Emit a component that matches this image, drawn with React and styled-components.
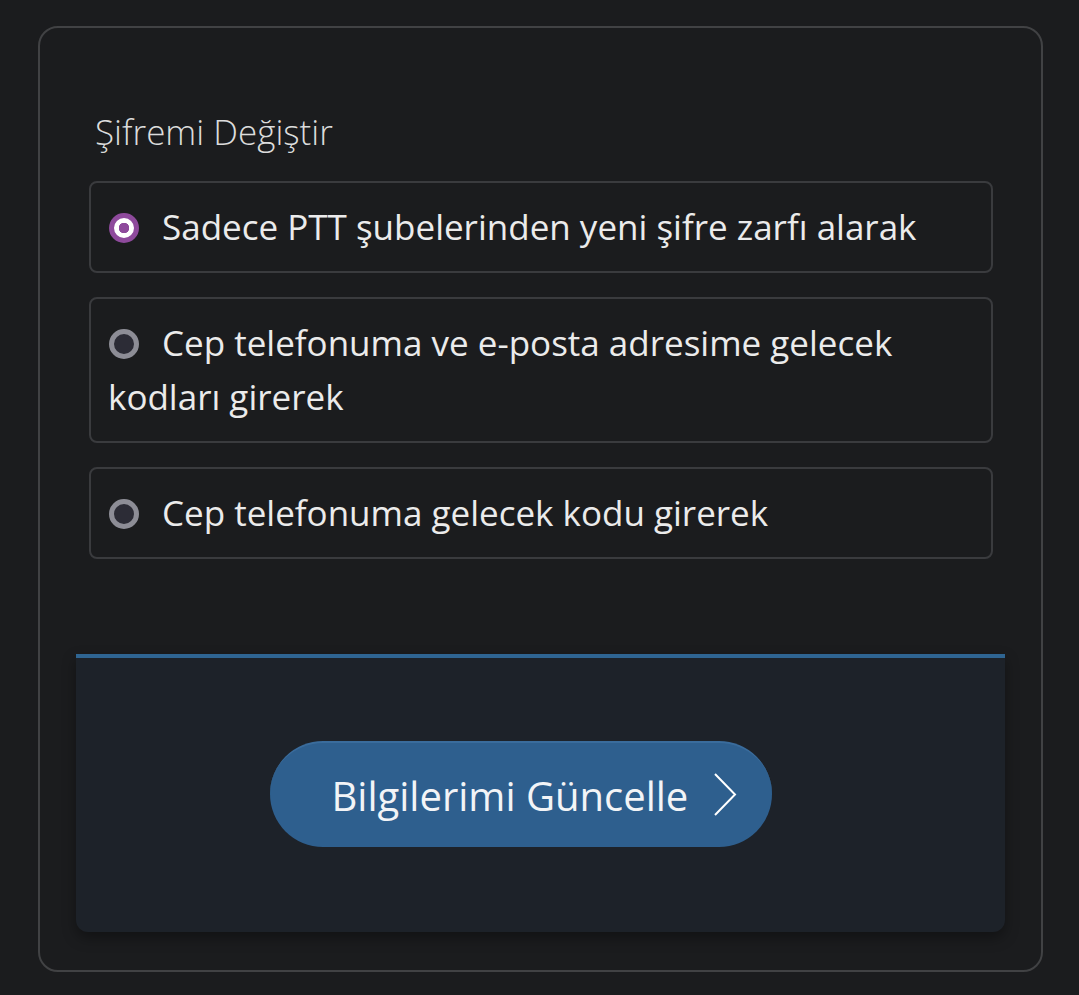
import React, { useState } from 'react';
import styled, { createGlobalStyle } from 'styled-components';

const GlobalStyle = createGlobalStyle`
  html, body {
    margin: 0;
    background-color: #1b1c1e;
  }
  body {
    font-family: "Open Sans", "Liberation Sans", sans-serif;
  }
`;

const Page = styled.div`
  padding: 26px 36px 24px 38px;
`;

const Card = styled.section`
  border: 2px solid #414244;
  border-radius: 20px;
  padding: 78px 36px 38px 36px;
`;

const Form = styled.div`
  padding: 0 12px 0 13px;
`;

const Title = styled.h2`
  margin: 0 0 23px 6px;
  font-size: 35px;
  line-height: 52px;
  font-weight: 300;
  color: #dcdcdc;
`;

const OptionList = styled.div`
  display: flex;
  flex-direction: column;
  gap: 24px;
`;

const Option = styled.label`
  display: block;
  border: 2px solid #3a3b3e;
  border-radius: 8px;
  padding: 17px 17px;
  font-size: 35px;
  line-height: 54px;
  color: #ebebeb;
  cursor: pointer;
`;

const Radio = styled.span`
  display: inline-block;
  box-sizing: border-box;
  width: 30px;
  height: 30px;
  margin: 0 23px 0 1px;
  vertical-align: -3px;
  border-radius: 50%;
  border: 5px solid ${(p) => (p.$checked ? '#8e4a9c' : '#8d8d96')};
  background-color: ${(p) => (p.$checked ? '#ffffff' : '#2c2c36')};
  background-image: ${(p) =>
    p.$checked ? 'radial-gradient(circle, #8e4a9c 0 5px, #ffffff 5.5px)' : 'none'};
`;

const Footer = styled.div`
  box-sizing: border-box;
  margin-top: 95px;
  border-top: 4px solid #2f6592;
  background-color: #1d2229;
  border-radius: 0 0 12px 12px;
  box-shadow: 0 6px 14px rgba(0, 0, 0, 0.35);
  height: 278px;
  display: flex;
  align-items: center;
  justify-content: center;
  padding-right: 40px;
  padding-bottom: 2px;
`;

const SubmitButton = styled.button`
  display: flex;
  align-items: center;
  gap: 25px;
  box-sizing: border-box;
  width: 502px;
  height: 106px;
  padding: 0 0 0 62px;
  border: none;
  border-top: 2px solid #3a6c9c;
  border-radius: 53px;
  background-color: #2e5f8e;
  color: #f2f4f7;
  font-family: "Open Sans", "Liberation Sans", sans-serif;
  font-size: 40px;
  font-weight: 400;
  cursor: pointer;
`;

const Chevron = () => (
  <svg width="24" height="44" viewBox="0 0 24 44" fill="none">
    <path d="M2 1 L22 21.5 L2 42" stroke="#ffffff" strokeWidth="2" />
  </svg>
);

const options = [
  'Sadece PTT şubelerinden yeni şifre zarfı alarak',
  'Cep telefonuma ve e-posta adresime gelecek kodları girerek',
  'Cep telefonuma gelecek kodu girerek',
];

export default function App() {
  const [selected, setSelected] = useState(0);

  return (
    <Page>
      <GlobalStyle />
      <Card>
        <Form>
          <Title>Şifremi Değiştir</Title>
          <OptionList>
            {options.map((text, i) => (
              <Option key={i} onClick={() => setSelected(i)}>
                <Radio $checked={selected === i} />
                {text}
              </Option>
            ))}
          </OptionList>
        </Form>
        <Footer>
          <SubmitButton>
            Bilgilerimi Güncelle
            <Chevron />
          </SubmitButton>
        </Footer>
      </Card>
    </Page>
  );
}
